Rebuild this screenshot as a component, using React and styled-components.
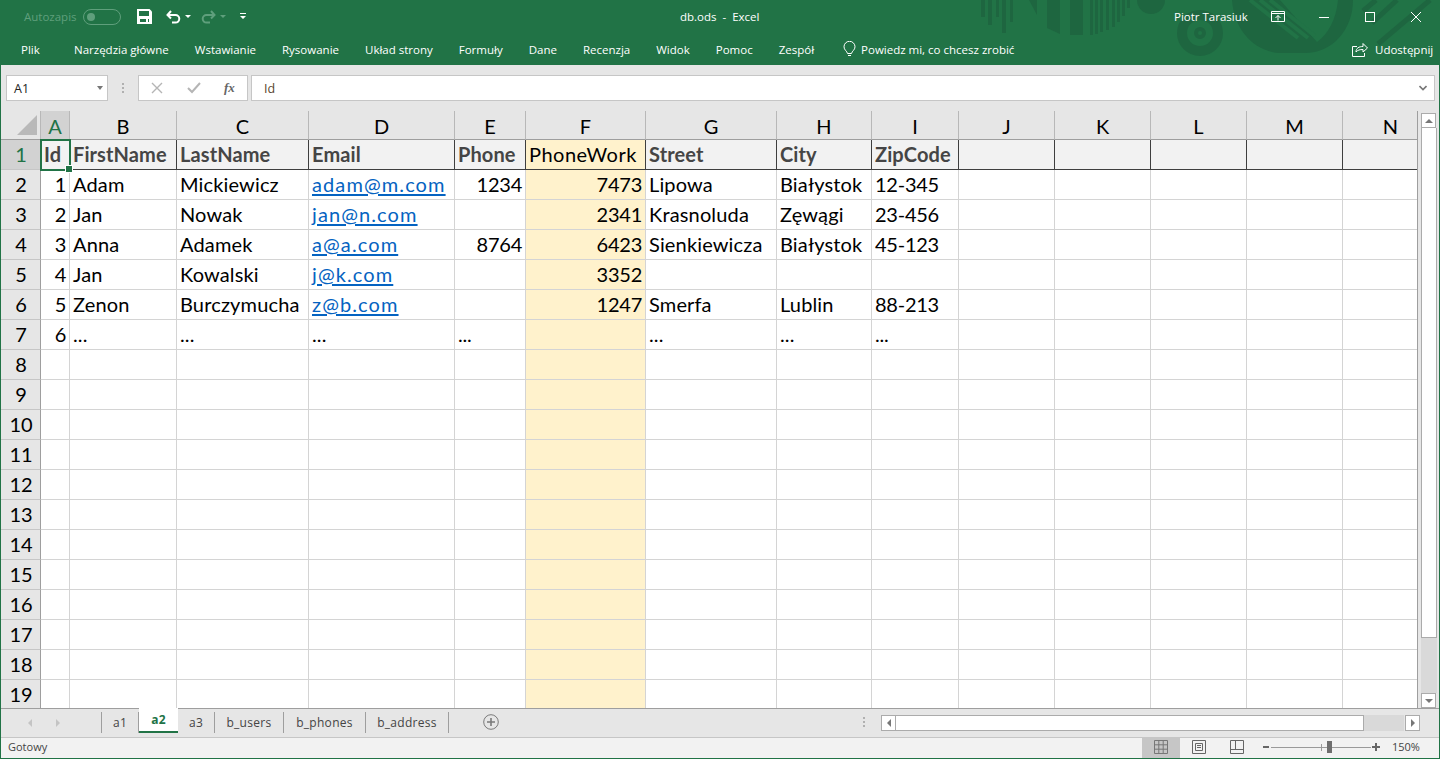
import styled, { createGlobalStyle } from "styled-components";

const COLS = [
  { name: "A", w: 29 },
  { name: "B", w: 107 },
  { name: "C", w: 132 },
  { name: "D", w: 146 },
  { name: "E", w: 71 },
  { name: "F", w: 120 },
  { name: "G", w: 131 },
  { name: "H", w: 95 },
  { name: "I", w: 87 },
  { name: "J", w: 96 },
  { name: "K", w: 96 },
  { name: "L", w: 96 },
  { name: "M", w: 96 },
  { name: "N", w: 96 },
];

const HEAD = ["Id", "FirstName", "LastName", "Email", "Phone", "PhoneWork", "Street", "City", "ZipCode"];

const ROWS = [
  ["1", "Adam", "Mickiewicz", "adam@m.com", "1234", "7473", "Lipowa", "Białystok", "12-345"],
  ["2", "Jan", "Nowak", "jan@n.com", "", "2341", "Krasnoluda", "Zęwągi", "23-456"],
  ["3", "Anna", "Adamek", "a@a.com", "8764", "6423", "Sienkiewicza", "Białystok", "45-123"],
  ["4", "Jan", "Kowalski", "j@k.com", "", "3352", "", "", ""],
  ["5", "Zenon", "Burczymucha", "z@b.com", "", "1247", "Smerfa", "Lublin", "88-213"],
  ["6", "...", "...", "...", "...", "", "...", "...", "..."],
];

const TABS = [
  { name: "a1", w: 38 },
  { name: "a2", w: 39, active: true },
  { name: "a3", w: 37 },
  { name: "b_users", w: 69 },
  { name: "b_phones", w: 82 },
  { name: "b_address", w: 83 },
];

const MENU = ["Narzędzia główne", "Wstawianie", "Rysowanie", "Układ strony", "Formuły", "Dane", "Recenzja", "Widok", "Pomoc", "Zespół"];

const RIGHT_ALIGNED = [0, 4, 5];
const NUMERIC = [0, 4, 5, 8];

const Global = createGlobalStyle`
  html, body { margin: 0; padding: 0; background: #e6e6e6; overflow: hidden; }
  * { box-sizing: border-box; }
`;

const Window = styled.div`
  width: 1440px;
  height: 759px;
  display: flex;
  flex-direction: column;
  border: 1px solid #217346;
  border-width: 0 1px 1px 1px;
  font-family: "Open Sans", sans-serif;
  overflow: hidden;
`;

const Ribbon = styled.div`
  position: relative;
  height: 65px;
  flex: none;
  margin: 0 -1px;
  background: #217346;
  color: #fff;
  font-size: 11.5px;
`;

const Art = styled.svg`
  position: absolute;
  top: 0;
  left: 960px;
`;

const TitleRow = styled.div`
  position: relative;
  height: 33px;
  display: flex;
  align-items: center;
`;

const Quick = styled.div`
  flex: 0 0 680px;
  display: flex;
  align-items: center;
  padding-left: 24px;
`;

const Autosave = styled.span`
  color: #5f9f7c;
  width: 59px;
`;

const Toggle = styled.span`
  width: 38px;
  height: 16px;
  border: 1px solid #5f9f7c;
  border-radius: 8px;
  margin-right: 16px;
  display: flex;
  align-items: center;
  padding-left: 3px;
  &::before {
    content: "";
    width: 8px;
    height: 8px;
    border-radius: 50%;
    background: #5f9f7c;
  }
`;

const QuickIcon = styled.svg`
  flex: none;
  margin-right: ${(p) => p.$gap || 0}px;
`;

const DocTitle = styled.span`
  flex: 0 0 494px;
  white-space: pre;
`;

const UserName = styled.span`
  flex: 0 0 97px;
`;

const WinIcon = styled.svg`
  flex: none;
  margin-right: ${(p) => p.$gap}px;
`;

const MenuRow = styled.div`
  position: relative;
  height: 32px;
  display: flex;
  align-items: center;
  gap: 26px;
  padding-left: 74px;
`;

const FileTab = styled.span`
  position: absolute;
  left: 21px;
`;

const MenuItem = styled.span`
  white-space: nowrap;
`;

const Tell = styled.span`
  display: flex;
  align-items: center;
  gap: 5px;
  margin-left: 3px;
  white-space: nowrap;
`;

const Share = styled.span`
  position: absolute;
  left: 1352px;
  display: flex;
  align-items: center;
  gap: 7px;
`;

const FormulaBar = styled.div`
  height: 46px;
  flex: none;
  background: #e6e6e6;
  display: flex;
  align-items: flex-start;
  padding: 10px 4px 0 5px;
`;

const NameBox = styled.div`
  width: 102px;
  height: 26px;
  background: #fff;
  border: 1px solid #c6c6c6;
  display: flex;
  align-items: center;
  justify-content: space-between;
  padding: 0 4px 0 7px;
  font-size: 12.5px;
  color: #222;
`;

const Caret = styled.span`
  width: 0;
  height: 0;
  border: 3.5px solid transparent;
  border-top: 4px solid #777;
  border-bottom: 0;
`;

const Grip = styled.span`
  width: 30px;
  height: 26px;
  display: flex;
  flex-direction: column;
  align-items: center;
  justify-content: center;
  gap: 2px;
  & > i {
    width: 2px;
    height: 2px;
    background: #b0b0b0;
  }
`;

const FxButtons = styled.div`
  width: 110px;
  height: 26px;
  background: #fff;
  border: 1px solid #c6c6c6;
  display: flex;
  align-items: center;
  padding-left: 12px;
  gap: 24px;
  margin-right: 3px;
`;

const FxLabel = styled.span`
  font-family: "Liberation Serif", serif;
  font-style: italic;
  font-weight: 700;
  font-size: 13px;
  color: #666;
  margin-left: -1px;
`;

const FormulaInput = styled.div`
  flex: 1;
  height: 26px;
  background: #fff;
  border: 1px solid #c6c6c6;
  display: flex;
  align-items: center;
  justify-content: space-between;
  padding: 0 7px 0 12px;
  font-size: 12.5px;
  color: #5a4630;
`;

const SheetArea = styled.div`
  height: 597px;
  flex: none;
  display: flex;
  background: #e6e6e6;
`;

const Sheet = styled.div`
  width: 1417px;
  height: 597px;
  flex: none;
  display: grid;
  grid-template-columns: 40px ${COLS.map((c) => c.w + "px").join(" ")};
  grid-template-rows: 29px repeat(19, 30px);
  overflow: hidden;
  background: #fff;
  border-right: 1px solid #9e9e9e;
  font-family: Lato, sans-serif;
  font-size: 20px;
  color: #000;
`;

const Corner = styled.div`
  background: #e6e6e6;
  border-right: 1px solid #b8b8b8;
  border-bottom: 1px solid #9e9e9e;
  display: flex;
  align-items: flex-end;
  justify-content: flex-end;
  padding: 0 3px 4px 0;
  &::after {
    content: "";
    width: 0;
    height: 0;
    border-style: solid;
    border-width: 0 0 20px 20px;
    border-color: transparent transparent #b9b9b9 transparent;
  }
`;

const ColHead = styled.div`
  background: ${(p) => (p.$selected ? "#d2d2d2" : "#e6e6e6")};
  color: ${(p) => (p.$selected ? "#217346" : "#000")};
  border-right: 1px solid #b8b8b8;
  border-bottom: 1px solid #9e9e9e;
  display: flex;
  align-items: flex-end;
  justify-content: center;
  padding-bottom: 1px;
  font-size: 20px;
  overflow: hidden;
`;

const RowHead = styled.div`
  background: ${(p) => (p.$selected ? "#d2d2d2" : "#e6e6e6")};
  color: ${(p) => (p.$selected ? "#217346" : "#000")};
  border-right: 1px solid #9e9e9e;
  border-bottom: 1px solid #c6c6c6;
  display: flex;
  align-items: center;
  justify-content: center;
  padding: 0 0 1px 1px;
`;

const Cell = styled.div`
  position: relative;
  border-right: 1px solid #d4d4d4;
  border-bottom: 1px solid #d4d4d4;
  background: ${(p) => (p.$yellow ? "#fff2cc" : "#fff")};
  display: flex;
  align-items: center;
  justify-content: ${(p) => (p.$right ? "flex-end" : "flex-start")};
  padding: 0 3px 2px;
  white-space: nowrap;
  letter-spacing: ${(p) => (p.$tight ? -0.25 : 0.15)}px;
`;

const HeadCell = styled(Cell)`
  background: ${(p) => (p.$yellow ? "#fff2cc" : "#f2f2f2")};
  color: ${(p) => (p.$yellow ? "#000" : "#454545")};
  font-weight: ${(p) => (p.$yellow ? 400 : 700)};
  letter-spacing: ${(p) => (p.$yellow ? 0.5 : 0.1)}px;
  border-right: 1px solid #3f3f3f;
  border-bottom: 1px solid #3f3f3f;
`;

const Link = styled.span`
  color: #0563c1;
  text-decoration: underline;
  text-underline-offset: 2px;
  letter-spacing: 1.1px;
`;

const Selection = styled.div`
  position: absolute;
  z-index: 2;
  left: -1px;
  top: -1px;
  width: 31px;
  height: 32px;
  border: 2px solid #217346;
  &::after {
    content: "";
    position: absolute;
    right: -4px;
    bottom: -4px;
    width: 6px;
    height: 6px;
    background: #217346;
    border: 1px solid #fff;
  }
`;

const VScroll = styled.div`
  flex: 1;
  display: flex;
  flex-direction: column;
  padding: 2px 2px 0 3px;
`;

const ScrollButton = styled.div`
  width: ${(p) => p.$w || 15}px;
  height: ${(p) => p.$h || 15}px;
  flex: none;
  background: #fff;
  border: 1px solid #ababab;
  display: flex;
  align-items: center;
  justify-content: center;
`;

const VThumb = styled.div`
  height: 510px;
  flex: none;
  background: #fff;
  border: 1px solid #ababab;
  border-top: 0;
`;

const VTrack = styled.div`
  flex: 1;
  background: #d9d9d9;
`;

const TabBar = styled.div`
  height: 29px;
  flex: none;
  background: #e6e6e6;
  border-top: 1px solid #9e9e9e;
  display: flex;
  align-items: flex-start;
`;

const TabNav = styled.div`
  width: 100px;
  height: 28px;
  display: flex;
  align-items: center;
  gap: 22px;
  padding-left: 26px;
`;

const SheetTab = styled.div`
  width: ${(p) => p.$w}px;
  height: ${(p) => (p.$active ? 25 : 21)}px;
  margin: ${(p) => (p.$active ? "-1px 0 0" : "3px 0 0")};
  display: flex;
  align-items: center;
  justify-content: center;
  font-size: 12px;
  letter-spacing: 0.3px;
  color: ${(p) => (p.$active ? "#217346" : "#444")};
  font-weight: ${(p) => (p.$active ? 700 : 400)};
  background: ${(p) => (p.$active ? "#fff" : "transparent")};
  border-left: ${(p) => (p.$first ? "1px solid #9e9e9e" : "0")};
  border-right: ${(p) => (p.$active ? "0" : "1px solid #9e9e9e")};
  border-bottom: ${(p) => (p.$active ? "2px solid #217346" : "0")};
`;

const AddSheet = styled.svg`
  flex: none;
  margin: 5px 0 0 34px;
`;

const HGrip = styled(Grip)`
  width: 4px;
  height: 14px;
  margin: 6px 0 0 363px;
`;

const HScroll = styled.div`
  display: flex;
  margin: 6px 0 0 15px;
  height: 16px;
`;

const HThumb = styled.div`
  width: 468px;
  background: #fff;
  border: 1px solid #ababab;
  border-left: 0;
`;

const HTrack = styled.div`
  width: 40px;
  background: #d9d9d9;
  margin-right: 1px;
`;

const StatusBar = styled.div`
  height: 21px;
  flex: none;
  background: #f2f2f2;
  border-top: 1px solid #c6c6c6;
  display: flex;
  align-items: center;
  padding-left: 7px;
  font-size: 11px;
  color: #444;
`;

const StatusText = styled.span`
  flex: 0 0 1134px;
  margin-bottom: 3px;
`;

const ViewButton = styled.div`
  width: 38px;
  height: 100%;
  flex: none;
  display: flex;
  align-items: center;
  justify-content: center;
  padding-bottom: 2px;
  background: ${(p) => (p.$on ? "#c6c6c6" : "transparent")};
`;

const Zoom = styled.div`
  display: flex;
  align-items: center;
  margin: 0 0 2px 6px;
`;

const Slider = styled.div`
  position: relative;
  width: 100px;
  height: 1px;
  margin: 0 1px;
  background: #9a9a9a;
  &::before {
    content: "";
    position: absolute;
    left: 50px;
    top: -3px;
    width: 1px;
    height: 7px;
    background: #9a9a9a;
  }
  &::after {
    content: "";
    position: absolute;
    left: 56px;
    top: -6px;
    width: 5px;
    height: 12px;
    background: #6e6e6e;
  }
`;

const Percent = styled.span`
  margin: 0 0 3px 12px;
`;

const Triangle = ({ dir, color = "#777" }) => {
  const pts = {
    up: "0,5 8,5 4,1",
    down: "0,1 8,1 4,5",
    left: "5,0 5,8 1,4",
    right: "1,0 1,8 5,4",
  }[dir];
  const size = dir === "up" || dir === "down" ? [8, 6] : [6, 8];
  return (
    <svg width={size[0]} height={size[1]} viewBox={`0 0 ${size[0]} ${size[1]}`}>
      <polygon points={pts} fill={color} />
    </svg>
  );
};

function App() {
  return (
    <>
      <Global />
      <Window>
        <Ribbon>
          <Art width="480" height="65" viewBox="0 0 480 65">
            <g fill="#1e6640">
              <rect x="21" y="0" width="4" height="17" />
              <rect x="28" y="0" width="4" height="25" />
              <rect x="36" y="0" width="3" height="17" />
              <rect x="42" y="0" width="4" height="33" />
              <rect x="50" y="0" width="3" height="22" />
              <polygon points="69,0 77,0 77,15" />
              <polygon points="87,0 100,0 100,34 87,28" />
              <rect x="110" y="0" width="13" height="35" />
              <rect x="130" y="0" width="3" height="35" />
              <rect x="135" y="0" width="3" height="34" />
              <rect x="140" y="0" width="3" height="32" />
              <rect x="146" y="0" width="3" height="30" />
              <rect x="152" y="0" width="3" height="27" />
              <rect x="157" y="0" width="3" height="22" />
              <rect x="162" y="0" width="3" height="16" />
              <rect x="167" y="0" width="3" height="8" />
              <path d="M177 0h28a14 14 0 0 1-28 0z" />
            </g>
            <g fill="none" stroke="#1e6640">
              <circle cx="240" cy="33" r="18" strokeWidth="10" />
              <circle cx="240" cy="33" r="4" strokeWidth="4" />
            </g>
            <path d="M272 0C274 30 295 53 322 53H345C372 53 393 30 393 0H378C376 20 368 34 357 42L320 0z" fill="#1e6640" />
            <g stroke="#217346" strokeWidth="4">
              <line x1="290" y1="0" x2="338" y2="38" />
              <line x1="300" y1="0" x2="348" y2="38" />
              <line x1="310" y1="0" x2="355" y2="36" />
            </g>
            <g stroke="#1e6640" strokeWidth="5">
              <line x1="403" y1="11" x2="416" y2="0" />
              <line x1="412" y1="23" x2="437" y2="0" />
              <line x1="418" y1="44" x2="470" y2="0" />
            </g>
          </Art>
          <TitleRow>
            <Quick>
              <Autosave>Autozapis</Autosave>
              <Toggle />
              <QuickIcon width="15" height="15" viewBox="0 0 15 15" $gap={14}>
                <path d="M0 0h12.500L15 2.500V15H0z" fill="#fff" />
                <rect x="2" y="2" width="10" height="5" fill="#217346" />
                <rect x="3" y="10" width="9" height="3" fill="#217346" />
                <rect x="9" y="10" width="2" height="3" fill="#fff" />
              </QuickIcon>
              <QuickIcon width="15" height="14" viewBox="0 0 15 14" $gap={4}>
                <path d="M1.500 5h8a3.800 3.800 0 0 1 0 7.600H6M5 1 1.500 5 5 8.500" fill="none" stroke="#fff" strokeWidth="2" />
              </QuickIcon>
              <QuickIcon width="6" height="4" viewBox="0 0 6 4" $gap={10}>
                <path d="M0 0h6L3 3z" fill="#fff" />
              </QuickIcon>
              <QuickIcon width="15" height="14" viewBox="0 0 15 14" $gap={4}>
                <path d="M13.500 5h-8a3.800 3.800 0 0 0 0 7.600H9M10 1l3.500 4L10 8.500" fill="none" stroke="#5f9f7c" strokeWidth="2" />
              </QuickIcon>
              <QuickIcon width="6" height="4" viewBox="0 0 6 4" $gap={14}>
                <path d="M0 0h6L3 3z" fill="#5f9f7c" />
              </QuickIcon>
              <QuickIcon width="6" height="7" viewBox="0 0 6 7">
                <path d="M0 0h6v1H0zM0 3h6L3 6z" fill="#fff" />
              </QuickIcon>
            </Quick>
            <DocTitle>db.ods  -  Excel</DocTitle>
            <UserName>Piotr Tarasiuk</UserName>
            <WinIcon width="14" height="11" viewBox="0 0 14 11" $gap={34}>
              <path d="M.5.5h13v10H.5zM.5 2.500h13" fill="none" stroke="#fff" />
              <path d="M7 9.500V4.500M4.500 7 7 4.500 9.500 7" fill="none" stroke="#fff" />
            </WinIcon>
            <WinIcon width="10" height="10" viewBox="0 0 10 10" $gap={36}>
              <path d="M0 5.500h10" stroke="#fff" />
            </WinIcon>
            <WinIcon width="10" height="10" viewBox="0 0 10 10" $gap={36}>
              <rect x=".5" y=".5" width="9" height="9" fill="none" stroke="#fff" />
            </WinIcon>
            <WinIcon width="10" height="10" viewBox="0 0 10 10" $gap={0}>
              <path d="M0 0l10 10M10 0 0 10" stroke="#fff" />
            </WinIcon>
          </TitleRow>
          <MenuRow>
            <FileTab>Plik</FileTab>
            {MENU.map((m) => (
              <MenuItem key={m}>{m}</MenuItem>
            ))}
            <Tell>
              <svg width="13" height="16" viewBox="0 0 13 16">
                <path d="M4.500 12.500C4 10 1 9 1 5.800a5.500 5.500 0 0 1 11 0C12 9 9 10 8.500 12.500zM5 14.500h3" fill="none" stroke="#fff" />
              </svg>
              Powiedz mi, co chcesz zrobić
            </Tell>
            <Share>
              <svg width="16" height="15" viewBox="0 0 16 15">
                <path d="M5 4.500H.5v10h12V11" fill="none" stroke="#fff" />
                <path d="M4 10c0-4 3-5.500 7-5.500V1.500l4.500 4.500L11 10V7.500C8 7.500 5.500 8 4 10z" fill="none" stroke="#fff" />
              </svg>
              Udostępnij
            </Share>
          </MenuRow>
        </Ribbon>

        <FormulaBar>
          <NameBox>
            A1
            <Caret />
          </NameBox>
          <Grip>
            <i />
            <i />
            <i />
          </Grip>
          <FxButtons>
            <svg width="12" height="12" viewBox="0 0 12 12">
              <path d="M1 1l10 10M11 1 1 11" stroke="#b5b5b5" strokeWidth="1.400" />
            </svg>
            <svg width="14" height="12" viewBox="0 0 14 12">
              <path d="M1 6l4 4 8-9" fill="none" stroke="#b5b5b5" strokeWidth="2" />
            </svg>
            <FxLabel>fx</FxLabel>
          </FxButtons>
          <FormulaInput>
            Id
            <svg width="8" height="6" viewBox="0 0 8 6">
              <path d="M.5 1 4 4.500 7.500 1" fill="none" stroke="#777" strokeWidth="1.600" />
            </svg>
          </FormulaInput>
        </FormulaBar>

        <SheetArea>
          <Sheet>
            <Corner />
            {COLS.map((c, i) => (
              <ColHead key={c.name} $selected={i === 0}>
                {c.name}
              </ColHead>
            ))}
            {Array.from({ length: 19 }, (_, r) => (
              <Row key={r} index={r} />
            ))}
          </Sheet>
          <VScroll>
            <ScrollButton>
              <Triangle dir="up" />
            </ScrollButton>
            <VThumb />
            <VTrack />
            <ScrollButton>
              <Triangle dir="down" />
            </ScrollButton>
          </VScroll>
        </SheetArea>

        <TabBar>
          <TabNav>
            <Triangle dir="left" color="#c4c4c4" />
            <Triangle dir="right" color="#c4c4c4" />
          </TabNav>
          {TABS.map((t, i) => (
            <SheetTab key={t.name} $w={t.w} $active={t.active} $first={i === 0}>
              {t.name}
            </SheetTab>
          ))}
          <AddSheet width="16" height="16" viewBox="0 0 16 16">
            <circle cx="8" cy="8" r="7.300" fill="none" stroke="#7a7a7a" />
            <path d="M8 4v8M4 8h8" stroke="#7a7a7a" strokeWidth="1.600" />
          </AddSheet>
          <HGrip>
            <i />
            <i />
            <i />
          </HGrip>
          <HScroll>
            <ScrollButton $w={15} $h={16}>
              <Triangle dir="left" />
            </ScrollButton>
            <HThumb />
            <HTrack />
            <ScrollButton $w={15} $h={16}>
              <Triangle dir="right" />
            </ScrollButton>
          </HScroll>
        </TabBar>

        <StatusBar>
          <StatusText>Gotowy</StatusText>
          <ViewButton $on>
            <svg width="14" height="14" viewBox="0 0 14 14">
              <path d="M.5.5h13v13H.5zM.5 4.800h13M.5 9.200h13M4.800.5v13M9.200.5v13" fill="none" stroke="#777" />
            </svg>
          </ViewButton>
          <ViewButton>
            <svg width="14" height="14" viewBox="0 0 14 14">
              <path d="M.5.5h13v13H.5zM3.500 3.500h7v7h-7zM5 5.500h4M5 7.500h4" fill="none" stroke="#666" />
            </svg>
          </ViewButton>
          <ViewButton>
            <svg width="14" height="14" viewBox="0 0 14 14">
              <path d="M.5.5h13v13H.5zM.5 9.500h13M5.500.5v9" fill="none" stroke="#666" />
            </svg>
          </ViewButton>
          <Zoom>
            <svg width="8" height="8" viewBox="0 0 8 8">
              <rect x="1" y="3" width="6" height="2" fill="#666" />
            </svg>
            <Slider />
            <svg width="8" height="8" viewBox="0 0 8 8">
              <path d="M0 3h3V0h2v3h3v2H5v3H3V5H0z" fill="#666" />
            </svg>
          </Zoom>
          <Percent>150%</Percent>
        </StatusBar>
      </Window>
    </>
  );
}

function Row({ index }) {
  const selected = index === 0;
  const data = index === 0 ? HEAD : ROWS[index - 1] || [];
  const Box = index === 0 ? HeadCell : Cell;
  return (
    <>
      <RowHead $selected={selected}>{index + 1}</RowHead>
      {COLS.map((c, i) => {
        const value = data[i];
        const right = index > 0 && RIGHT_ALIGNED.includes(i);
        return (
          <Box key={c.name} $right={right && value !== "..."} $tight={NUMERIC.includes(i)} $yellow={i === 5}>
            {index > 0 && i === 3 && value && value !== "..." ? <Link>{value}</Link> : value}
            {selected && i === 0 && <Selection />}
          </Box>
        );
      })}
    </>
  );
}

export default App;
